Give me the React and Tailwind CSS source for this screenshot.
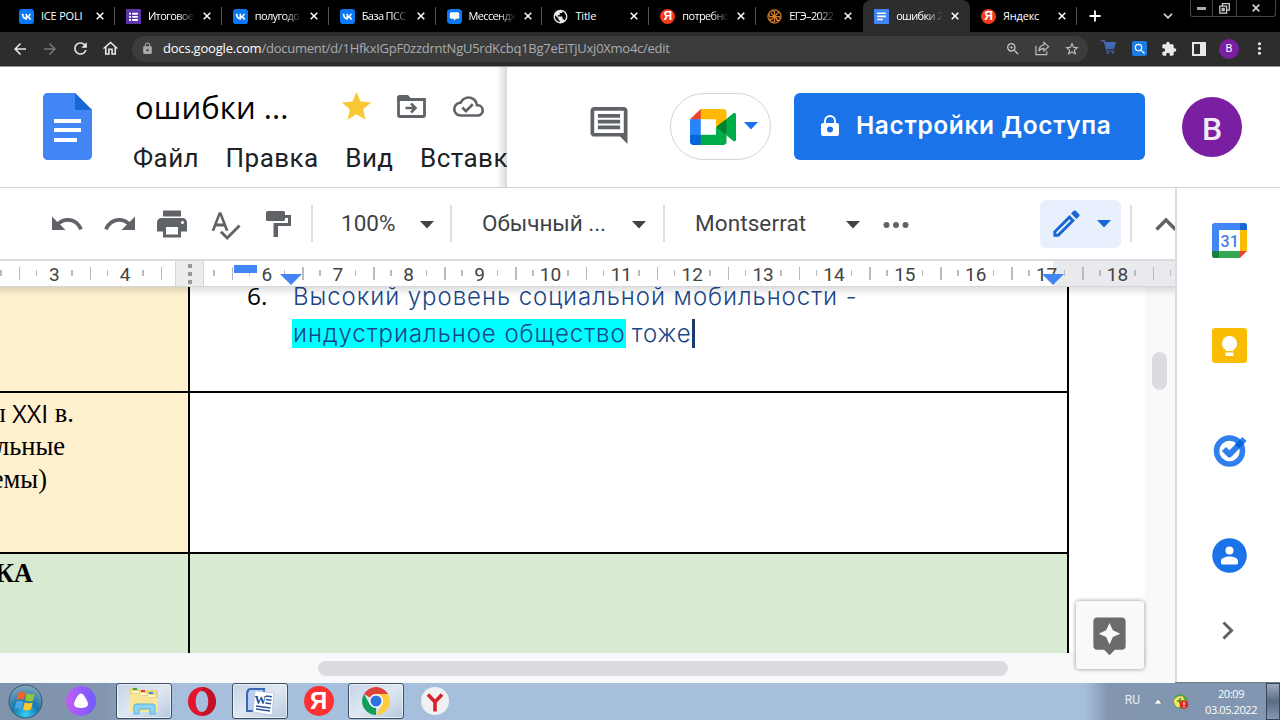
import React from 'react';
import {
  MdArrowBack, MdArrowForward, MdRefresh, MdOutlineHome, MdLock, MdZoomIn, MdStarBorder, MdShoppingCart,
  MdExtension, MdMoreVert, MdStar, MdUndo, MdRedo, MdPrint, MdSpellcheck, MdAssistant, MdSearch, MdPublic,
  MdOutlineCloudDone, MdOutlineEdit,
} from 'react-icons/md';

const SANS = "font-['Open_Sans','Noto_Sans',sans-serif]";
const ROBOTO = "font-['Roboto',sans-serif]";

function VkIcon() {
  return (
    <svg viewBox="0 0 24 24" className="size-full">
      <rect width="24" height="24" rx="5" fill="#0a78f5" />
      <path fill="#fff" d="M12.7 17C7.500 17 4.500 13.300 4.400 7.500h2.700c.1 4.200 2 6 3.400 6.300V7.500H13v3.700c1.500-.2 3.100-1.900 3.600-3.700h2.500c-.4 2.100-2 3.800-3.200 4.500 1.200.5 3 2 3.700 5h-2.700c-.6-1.700-2-2.900-3.900-3.100V17z" />
    </svg>
  );
}

function FormsIcon() {
  return (
    <svg viewBox="0 0 24 24" className="size-full">
      <rect width="24" height="24" rx="1" fill="#5e35a8" />
      <path fill="#fff" d="M5 6h3v3H5zm0 5h3v3H5zm0 5h3v3H5zM10 6h9v3h-9zm0 5h9v3h-9zm0 5h9v3h-9z" />
    </svg>
  );
}

function ChatIcon() {
  return (
    <svg viewBox="0 0 24 24" className="size-full">
      <rect width="24" height="24" rx="6" fill="#0a78f5" />
      <path fill="#fff" d="M7 5h10a2.500 2.500 0 0 1 2.500 2.500V13a2.500 2.500 0 0 1-2.500 2.500h-3L11 19v-3.500H7A2.500 2.500 0 0 1 4.500 13V7.500A2.500 2.500 0 0 1 7 5z" />
    </svg>
  );
}

function YandexBadge({ className = "text-[12px] bg-[#f23c1c] font-['Liberation_Sans',sans-serif]" }) {
  return (
    <span className={`flex size-full items-center justify-center rounded-full font-bold leading-none text-white ${className}`}>
      Я
    </span>
  );
}

function WheelIcon() {
  return (
    <svg viewBox="0 0 24 24" className="size-full" fill="none" stroke="#d07a2a" strokeWidth="2">
      <circle cx="12" cy="12" r="10.500" />
      <path d="M12 12V4l-4-1M12 12l6-6v-3M12 12h8l1 4M12 12l6 6h-4M12 12v8l-4 1M12 12l-6 6-2-3M12 12H4L3 8M12 12 6 6" />
    </svg>
  );
}

function DocsSmallIcon() {
  return (
    <svg viewBox="0 0 24 24" className="size-full">
      <rect width="24" height="24" rx="1.500" fill="#4285f4" />
      <path fill="#fff" d="M5 5.500h14V8H5zm0 5h14V13H5zm0 5h9V18H5z" />
    </svg>
  );
}

function CloseX() {
  return (
    <svg viewBox="0 0 8 8" className="size-2 shrink-0" stroke="#fff" strokeWidth="1.500">
      <path d="M.7.7l6.600 6.600M7.300.7L.7 7.300" />
    </svg>
  );
}

const tabs = [
  { icon: <VkIcon />, title: 'ICE POLI' },
  { icon: <FormsIcon />, title: 'Итоговое', fade: true },
  { icon: <VkIcon />, title: 'полугодо', fade: true },
  { icon: <VkIcon />, title: 'База ПСС', fade: true },
  { icon: <ChatIcon />, title: 'Мессендж', fade: true },
  { icon: <MdPublic className="size-full scale-110 text-[#e8e8e8]" />, title: 'Title' },
  { icon: <YandexBadge />, title: 'потребно', fade: true },
  { icon: <WheelIcon />, title: 'ЕГЭ–2022', fade: true },
  { icon: <DocsSmallIcon />, title: 'ошибки 2', active: true, fade: true },
  { icon: <YandexBadge />, title: 'Яндекс' },
];

function TabStrip() {
  return (
    <div className="flex h-8 bg-black pl-2">
      {tabs.map((t, i) => (
        <div
          key={i}
          className={`flex w-[106.900px] shrink-0 items-center pl-[11px] ${t.active ? 'rounded-t-lg bg-[#2d2d2d]' : ''}`}
        >
          <span className="size-[15px] shrink-0">{t.icon}</span>
          <span className={`ml-[7px] w-[47px] shrink-0 overflow-hidden whitespace-nowrap text-[11px] text-white ${SANS} ${t.fade ? 'tracking-[-0.650px] [mask-image:linear-gradient(to_right,black_62%,transparent_100%)]' : 'tracking-[-0.200px]'}`}>
            {t.title}
          </span>
          <span className="ml-[8px] flex flex-1 items-center justify-between">
            <CloseX />
            <span className={`h-[18px] w-px ${t.active || i === 7 ? '' : 'bg-[#555]'}`} />
          </span>
        </div>
      ))}
      <svg viewBox="0 0 12 12" className="mt-[10px] ml-[12px] size-3 shrink-0" stroke="#fff" strokeWidth="1.800">
        <path d="M6 .5v11M.5 6h11" />
      </svg>
      <svg viewBox="0 0 10 6" className="mt-[13px] ml-[62px] h-[6px] w-[10px] shrink-0" fill="none" stroke="#ddd" strokeWidth="1.600">
        <path d="M1 .8l4 4 4-4" />
      </svg>
      <div className="ml-[17px] flex h-[17px] shrink-0 rounded-b-[3px] border border-t-0 border-[#444]">
        <span className="flex w-[22px] items-center justify-center border-r border-[#444]">
          <span className="h-[3px] w-[9px] bg-[#aaa]" />
        </span>
        <span className="flex w-[24px] items-center justify-center border-r border-[#444]">
          <svg viewBox="0 0 11 11" className="size-[11px]" fill="none" stroke="#ccc" strokeWidth="1.300">
            <path d="M3.500 3V.7h6.800v6.500H8M.8 3.200h6.800v7H.8zM3.200 5.500h2v2h-2z" />
          </svg>
        </span>
        <span className="flex w-[38px] items-center justify-center">
          <svg viewBox="0 0 8 8" className="size-2" stroke="#ccc" strokeWidth="1.800">
            <path d="M.7.7l6.600 6.600M7.300.7L.7 7.300" />
          </svg>
        </span>
      </div>
    </div>
  );
}

function AddressBar() {
  return (
    <div className="flex h-[34px] items-center border-b border-[#262626] bg-[#2d2d2d] text-[#e8eaed]">
      <div className="flex w-[132px] shrink-0 items-center gap-[12px] pl-[11px]">
        <MdArrowBack className="size-[18px]" />
        <MdArrowForward className="size-[18px] text-[#777]" />
        <MdRefresh className="size-[19px]" />
        <MdOutlineHome className="size-[19px] -ml-px" />
      </div>
      <div className={`flex h-[26px] w-[956px] shrink-0 items-center rounded-full bg-[#3c3c3c] pl-[9px] pr-[8px] ${SANS}`}>
        <MdLock className="size-[13px] text-[#aaa]" />
        <span className="ml-[9px] flex-1 whitespace-nowrap text-[13px] leading-none text-[#a9acb0]">
          <span className="tracking-[-0.200px] text-white">docs.google.com</span>
          <span className="tracking-[-0.260px]">/document/d/1HfkxIGpF0zzdrntNgU5rdKcbq1Bg7eEiTjUxj0Xmo4c/edit</span>
        </span>
        <span className="flex items-center gap-[14px] text-[#c4c4c4]">
          <MdZoomIn className="size-4" />
          <svg viewBox="0 0 16 16" className="size-[15px]" fill="none" stroke="#bbb" strokeWidth="1.300">
            <path d="M1 5v9.500h11.500V11M9.500 1.500l5 4.500-5 4.500V7.800C7 7.800 5.200 8.800 4 11c.3-3.500 2-6.300 5.500-6.800z" />
          </svg>
          <MdStarBorder className="size-4" />
        </span>
      </div>
      <div className="flex flex-1 items-center pl-[13px]">
        <svg viewBox="0 0 17 14" className="h-[14px] w-[17px] shrink-0 -mt-[3px]">
          <path fill="#3f69b3" d="M0 0h3.500l1 2H15l-2 7H6l.5 1.500H13v1H5.500L2.700 1.500H0z" />
          <circle cx="7" cy="12.500" r="1.300" fill="#3f5f96" /><circle cx="12" cy="12.500" r="1.300" fill="#3f5f96" />
        </svg>
        <span className="ml-[14px] flex size-[15px] items-center justify-center rounded-[2px] bg-[#1b7ce6]">
          <MdSearch className="size-[14px] text-white" />
        </span>
        <MdExtension className="ml-[14px] size-4" />
        <span className="ml-[15px] flex size-[14px] justify-end border-2 border-[#e8e8e8]">
          <span className="w-[4px] bg-[#e8e8e8]" />
        </span>
        <span className={`ml-[13px] flex size-[20px] items-center justify-center rounded-full bg-[#7b1fa2] text-[11px] leading-none text-white ${ROBOTO}`}>B</span>
        <MdMoreVert className="ml-[11px] size-[19px]" />
      </div>
    </div>
  );
}

function Caret({ className = 'text-[#5f6368]' }) {
  return (
    <svg viewBox="0 0 14 8" className={`h-2 w-[14px] shrink-0 ${className}`} fill="currentColor">
      <path d="M0 0h14L7 7.500z" />
    </svg>
  );
}

function MeetIcon() {
  return (
    <svg viewBox="0 0 87.500 72" className="h-[36px] w-[46px]" preserveAspectRatio="none">
      <path fill="#00832d" d="M49.500 36l8.530 9.750 11.470 7.330 2-17.020-2-16.640-11.690 6.440z" />
      <path fill="#0066da" d="M0 51.500V66c0 3.315 2.685 6 6 6h14.500l3-10.960-3-9.540-9.950-3z" />
      <path fill="#e94235" d="M20.500 0L0 20.500l10.550 3 9.950-3 2.950-9.410z" />
      <path fill="#2684fc" d="M20.500 20.500H0v31h20.500z" />
      <path fill="#00ac47" d="M82.600 8.680L69.500 19.420v33.660l13.160 10.790c1.970 1.540 4.850.135 4.850-2.370V11c0-2.535-2.945-3.925-4.910-2.320zM49.500 36v15.500h-29V72h43c3.315 0 6-2.685 6-6V53.080z" />
      <path fill="#ffba00" d="M63.500 0h-43v20.500h29V36l20-16.570V6c0-3.315-2.685-6-6-6z" />
    </svg>
  );
}

function Header() {
  return (
    <header className="flex h-[122px] border-t border-b border-t-[#999] border-b-[#d4d6d9] bg-white">
      <div className="relative flex w-[507px] shrink-0 overflow-hidden pl-[43px]">
        <svg viewBox="0 0 49 67" className="mt-[26px] h-[67px] w-[49px] shrink-0">
          <path fill="#4285f4" d="M4.500 0H32l17 17v45.500a4.500 4.500 0 0 1-4.500 4.500h-40A4.500 4.500 0 0 1 0 62.500v-58A4.500 4.500 0 0 1 4.500 0z" />
          <path fill="#1967d2" d="M32 0l17 17H32z" />
          <path fill="#fff" d="M11 26h27v4H11zm0 9h27v4H11zm0 10h23v4H11z" />
        </svg>
        <div className="ml-[41px] flex flex-col">
          <div className="mt-[17px] ml-[2px] flex h-[46px] items-center">
            <span className={`w-[205px] whitespace-nowrap text-[31px] tracking-[0.100px] text-black ${SANS}`}>ошибки ...</span>
            <MdStar className="-mt-[2px] size-[35px] shrink-0 text-[#f9c834] -ml-[1px]" />
            <svg viewBox="0 0 29 23" className="ml-[23px] h-[23px] w-[29px] shrink-0 -mt-[2px]" fill="none" stroke="#5f6368" strokeWidth="2.800">
              <path d="M1.500 4.500h26v15.500a1.500 1.500 0 0 1-1.500 1.500H3A1.500 1.500 0 0 1 1.500 20z" />
              <path fill="#5f6368" stroke="none" d="M0 6V2.500A2.500 2.500 0 0 1 2.500 0H11l3 3.500V6z" />
              <path d="M8.500 13h9M14 8.500l4.500 4.500-4.500 4.500" strokeWidth="2.500" />
            </svg>
            <MdOutlineCloudDone className="ml-[27px] size-[31px] shrink-0 text-[#5f6368] -mt-[2px]" />
          </div>
          <nav className={`mt-[11px] flex gap-[26.500px] whitespace-nowrap text-[26px] leading-[34px] tracking-[0.460px] text-[#202124] ${ROBOTO}`}>
            <span>Файл</span>
            <span>Правка</span>
            <span>Вид</span>
            <span>Вставка</span>
          </nav>
        </div>
        <div className="absolute inset-y-0 right-0 w-[10px] bg-linear-to-r from-transparent to-black/15" />
      </div>
      <div className="flex flex-1 items-start">
        <svg viewBox="2 2 20 20" className="mt-[40px] ml-[83px] h-[37px] w-[38px] shrink-0" fill="#5f6368">
          <path d="M22 4c0-1.100-.9-2-2-2H4c-1.100 0-2 .9-2 2v12c0 1.100.9 2 2 2h14l4 4V4zM4 16V4h16v12z" fillRule="evenodd" />
          <path d="M6 12h12v2H6zm0-3.100h12v2H6zm0-3.100h12v2H6z" />
        </svg>
        <div className="mt-[26px] ml-[42px] flex h-[67px] w-[101px] shrink-0 items-center rounded-full border border-[#d2d5d9] pl-[19px]">
          <MeetIcon />
          <Caret className="ml-[8px] -mt-px text-[#1a73e8]" />
        </div>
        <div className="mt-[26px] ml-[23px] flex h-[67px] w-[351px] shrink-0 items-center rounded-[6px] bg-[#1a73e8] pl-[27px]">
          <svg viewBox="0 0 18 21" className="-mt-[2px] h-[21px] w-[18px] shrink-0">
            <path fill="none" stroke="#fff" strokeWidth="2" d="M4 9V6a5 5 0 0 1 10 0v3" />
            <path fill="#fff" fillRule="evenodd" d="M2 8h14a2 2 0 0 1 2 2v9a2 2 0 0 1-2 2H2a2 2 0 0 1-2-2v-9a2 2 0 0 1 2-2zm7 3.500a3 3 0 1 0 0 6 3 3 0 0 0 0-6z" />
          </svg>
          <span className="-mt-[2px] ml-[17px] whitespace-nowrap text-[24.500px] font-semibold tracking-[0.600px] text-white font-['Inter',sans-serif]">
            Настройки Доступа
          </span>
        </div>
        <div className={`mt-[30px] ml-[37px] flex size-[60px] shrink-0 items-center justify-center rounded-full bg-[#7b1fa2] pt-[3px] text-[32px] leading-none font-medium text-[#f3eaf7] ${ROBOTO}`}>
          B
        </div>
      </div>
    </header>
  );
}

function Divider({ className = '' }) {
  return <span className={`h-[37px] w-[2px] shrink-0 bg-[#dcdee1] ${className}`} />;
}

function Toolbar() {
  return (
    <div className={`flex h-[73px] shrink-0 items-center overflow-hidden border-b-2 border-[#d9dbde] bg-white text-[22.500px] text-[#3f4246] ${ROBOTO}`}>
      <MdUndo className="mt-px ml-[49px] size-9 shrink-0 text-[#5f6368]" />
      <MdRedo className="mt-px ml-[17px] size-9 shrink-0 text-[#5f6368]" />
      <MdPrint className="mt-px ml-[16px] size-9 shrink-0 text-[#5f6368]" />
      <MdSpellcheck className="mt-[2px] ml-[18px] size-[34px] shrink-0 text-[#5f6368]" />
      <svg viewBox="0 0 25 26" className="mt-px ml-[24px] h-[26px] w-[25px] shrink-0" fill="#5f6368">
        <rect width="19" height="10" rx="1.500" />
        <path d="M18 4h7v11H12v11H7.500V12H22V7h-4z" />
      </svg>
      <Divider className="ml-[20px]" />
      <span className="ml-[28px] w-[79px] shrink-0">100%</span>
      <Caret className="mt-[3px]" />
      <Divider className="ml-[16px]" />
      <span className="ml-[30px] w-[150px] shrink-0 tracking-[-0.050px]">Обычный ...</span>
      <Caret className="mt-[3px]" />
      <Divider className="ml-[17px]" />
      <span className="ml-[30px] w-[151px] shrink-0 tracking-[0.100px]">Montserrat</span>
      <Caret className="mt-[3px]" />
      <svg viewBox="0 0 26 6" className="mt-[3px] ml-[23px] h-[6px] w-[26px] shrink-0" fill="#5f6368">
        <circle cx="3.500" cy="3" r="3" /><circle cx="13" cy="3" r="3" /><circle cx="22.500" cy="3" r="3" />
      </svg>
      <div className="ml-[131px] flex h-[48px] w-[81px] shrink-0 items-center rounded-[6px] bg-[#e8f0fe] pl-[9px]">
        <MdOutlineEdit className="size-[35px] text-[#1967d2]" />
        <Caret className="ml-[13px] text-[#1967d2]" />
      </div>
      <Divider className="ml-[9px]" />
      <svg viewBox="0 0 22 14" className="ml-[23px] h-[14px] w-[22px] shrink-0" fill="none" stroke="#5f6368" strokeWidth="3.500">
        <path d="M1.500 12.500L11 3l9.500 9.500" />
      </svg>
    </div>
  );
}

const marks = [2, 3, 4, 5, 6, 7, 8, 9, 10, 11, 12, 13, 14, 15, 16, 17, 18, 19];

function Ruler() {
  return (
    <div className="relative flex h-[26px] shrink-0 overflow-hidden border-b border-[#d5d7da] bg-[linear-gradient(to_right,white_1053px,#e8eaed_1053px)]">
      <div className="-ml-[52px] flex">
        {marks.map((n) => (
          <div key={n} className={`flex h-6 w-[70.880px] shrink-0 items-center text-[19px] text-[#444] ${ROBOTO}`}>
            <span className="h-[13px] w-[1.500px] bg-[#b9bbbe]" />
            <span className="ml-[15.500px] h-[6px] w-[1.500px] bg-[#b9bbbe]" />
            <span className="mt-[2px] flex-1 text-center leading-none">{n === 5 ? '' : n}</span>
            <span className="mr-[17px] h-[6px] w-[1.500px] bg-[#b9bbbe]" />
          </div>
        ))}
      </div>
      <div className="absolute inset-y-0 left-[175px] flex w-[29px] flex-col items-center justify-center gap-[4px] border-r border-l border-[#d5d7da] bg-[#ececec]">
        <span className="size-[4px] bg-[#999]" />
        <span className="size-[4px] bg-[#999]" />
        <span className="size-[4px] bg-[#999]" />
      </div>
      <span className="absolute top-[4px] left-[234px] h-[8px] w-[23px] bg-[#4285f4]" />
      <svg viewBox="0 0 22 11" className="absolute top-[13px] left-[280px] h-[11px] w-[22px]" fill="#4285f4"><path d="M0 0h22L11 11z" /></svg>
      <svg viewBox="0 0 22 11" className="absolute top-[13px] left-[1042px] h-[11px] w-[22px]" fill="#4285f4"><path d="M0 0h22L11 11z" /></svg>
    </div>
  );
}

function Page() {
  return (
    <div className="relative flex h-[366px] shrink-0 overflow-hidden">
      <div className="flex w-[1145px] shrink-0 bg-white">
        <div className="flex w-[190px] shrink-0 flex-col border-r-2 border-black font-['Liberation_Serif',serif] text-[26.500px] leading-[33.300px] text-black">
          <div className="h-[106px] shrink-0 border-b-2 border-black bg-[#fff0ce]" />
          <div className="h-[161px] shrink-0 overflow-hidden border-b-2 border-black bg-[#fff0ce] pt-[3.500px] whitespace-nowrap">
            <div className="flex w-[74px] justify-end whitespace-pre">ы <span className={`text-[25px] ${SANS}`}>XXI</span> в.</div>
            <div className="flex w-[65px] justify-end">льные</div>
            <div className="flex w-[47px] justify-end">емы)</div>
          </div>
          <div className="flex-1 overflow-hidden bg-[#d9ead3] pt-[3px] font-bold">
            <div className="flex w-[33px] justify-end">КА</div>
          </div>
        </div>
        <div className="flex w-[879px] shrink-0 flex-col border-r-2 border-black">
          <div className="flex h-[106px] shrink-0 overflow-hidden border-b-2 border-black pl-[57px] font-['Inter',sans-serif] text-[24px] leading-[37px]">
            <span className={`-mt-[10px] w-[46px] text-[24.500px] text-black ${SANS}`}>6.</span>
            <div className="-mt-[9px] whitespace-nowrap font-light text-[#1c4587]">
              <div className="tracking-[0.950px]">Высокий уровень социальной мобильности -</div>
              <div className="flex items-center tracking-[0.950px]">
                <span className="-ml-px bg-[#00ffff] pl-px leading-[29px]">индустриальное общество</span>
                <span className="ml-[6px]">тоже</span>
                <span className="h-[29px] w-[3px] bg-[#1c3a6e]" />
              </div>
            </div>
          </div>
          <div className="h-[161px] shrink-0 border-b-2 border-black" />
          <div className="flex-1 bg-[#d9ead3]" />
        </div>
      </div>
      <div className="flex flex-1 justify-center bg-[#f8f9fb] pt-[65px] pr-px">
        <span className="h-[38px] w-[15px] rounded-full bg-[#dadce0]" />
      </div>
      <div className="absolute inset-x-0 top-0 h-[9px] bg-linear-to-b from-black/12 to-transparent" />
    </div>
  );
}

function CalendarIcon() {
  return (
    <svg viewBox="0 0 35 35" className="size-[35px]">
      <path fill="#4285f4" d="M2.500 0H28v7H7v21H0V2.500A2.500 2.500 0 0 1 2.500 0z" />
      <path fill="#1967d2" d="M28 0h4.500A2.500 2.500 0 0 1 35 2.500V7h-7z" />
      <path fill="#fbbc04" d="M28 7h7v21h-7z" />
      <path fill="#34a853" d="M7 28h21v7H7z" />
      <path fill="#188038" d="M0 28h7v7H2.500A2.500 2.500 0 0 1 0 32.500z" />
      <path fill="#ea4335" d="M28 28h7l-7 7z" />
      <path fill="#fff" d="M7 7h21v21H7z" />
      <text x="17.700" y="23.500" textAnchor="middle" fontSize="16" fontFamily="Roboto" fontWeight="500" fill="#3f80e8">31</text>
    </svg>
  );
}

function SidePanel() {
  return (
    <aside className="flex w-[105px] shrink-0 flex-col items-center gap-[70px] border-l-2 border-[#d9dbde] bg-white pt-[35px] pl-[2px]">
      <CalendarIcon />
      <svg viewBox="0 0 35 35" className="size-[35px] shrink-0">
        <rect width="35" height="35" rx="3" fill="#fbbc04" />
        <path fill="#fff" d="M17.500 8a7.500 7.500 0 0 1 4 13.800V23h-8v-1.200A7.500 7.500 0 0 1 17.500 8zM13.500 24.500h8V28h-8z" />
      </svg>
      <svg viewBox="0 0 35 35" className="size-[35px] shrink-0">
        <circle cx="17.500" cy="18" r="13" fill="none" stroke="#2f80ed" strokeWidth="5.500" />
        <path fill="none" stroke="#2f80ed" strokeWidth="6" strokeLinejoin="round" d="M12 16l5.500 5.500L32.500 6" />
        <path stroke="#0066da" strokeWidth="6" d="M25 13.500l5-5" />
      </svg>
      <svg viewBox="0 0 35 35" className="size-[35px] shrink-0">
        <circle cx="17.500" cy="17.500" r="17.300" fill="#1a73e8" />
        <circle cx="17.500" cy="12.500" r="4" fill="#fff" />
        <path fill="#fff" d="M9 25v-2c0-3 4.500-4.500 8.500-4.500S26 20 26 23v2a1.500 1.500 0 0 1-1.500 1.500h-14A1.500 1.500 0 0 1 9 25z" />
      </svg>
      <svg viewBox="0 0 12 19" className="-mt-[22px] -ml-[3px] h-[19px] w-[12px] shrink-0" fill="none" stroke="#5f6368" strokeWidth="3">
        <path d="M1.500 1.500l8 8-8 8" />
      </svg>
    </aside>
  );
}

function Workspace() {
  return (
    <main className="flex h-[495px]">
      <div className="relative flex w-[1175px] shrink-0 flex-col">
        <Toolbar />
        <Ruler />
        <Page />
        <div className="flex flex-1 bg-[#f8f9fb] pt-[8px] pl-[318px]">
          <span className="h-[15px] w-[690px] rounded-full bg-[#dadce0]" />
        </div>
        <div className="absolute top-[413px] left-[1075.500px] flex size-[68px] items-center justify-center rounded-[3px] bg-[#f9f9f9] shadow-[0_0_4px_rgba(0,0,0,0.450)]">
          <MdAssistant className="mt-[1px] -ml-px size-[43px] text-[#6b6b6b]" />
        </div>
      </div>
      <SidePanel />
    </main>
  );
}

function TaskButton({ children }) {
  return (
    <div className="flex h-[36px] w-[56px] shrink-0 items-center justify-center rounded-[3px] border border-[#3f4d60] bg-linear-to-br from-[#c4d3e6] via-[#dfe8f2] to-[#b5c8df] shadow-[inset_0_0_0_1px_rgba(255,255,255,0.600)]">
      {children}
    </div>
  );
}

function WindowsOrb() {
  return (
    <svg viewBox="0 0 35 35" className="size-[35px]">
      <defs>
        <radialGradient id="orb" cx="50%" cy="90%" r="90%">
          <stop offset="0" stopColor="#35d0f5" />
          <stop offset=".45" stopColor="#1878ad" />
          <stop offset="1" stopColor="#88a8bd" />
        </radialGradient>
      </defs>
      <circle cx="17.500" cy="17.500" r="16.500" fill="url(#orb)" stroke="#39536b" strokeWidth="1" />
      <path fill="#f0652f" d="M10 9c3-2 5-1.500 7.500-.3L15.800 16c-2.500-1.200-4.500-1.300-7.300.2z" />
      <path fill="#90c73e" d="M18.700 9.300c3 1.300 5 1.500 8 .2L25 16.800c-2.600 1.200-5 1-8-.2z" />
      <path fill="#4aa8e8" d="M8.200 17.800c2.700-1.500 4.800-1.300 7.300-.2l-1.800 7.200c-2.500-1.200-4.600-1-7.200.3z" />
      <path fill="#fdc92e" d="M16.700 18.200c3 1.200 5.200 1.300 8 .2L23 25.600c-2.800 1.200-5 1-8-.2z" />
    </svg>
  );
}

function Taskbar() {
  return (
    <footer className="flex h-[38px] items-start border-t border-[#6f7b8c] bg-[linear-gradient(to_right,#8093ad_0,#8296b0_105px,#a5bfdd_172px,#a5bfdd_1085px,#8296b0_1108px,#8196b1_100%)]">
      <div className="flex h-[36px] w-[116px] shrink-0 items-center pl-[7.500px]">
        <WindowsOrb />
        <svg viewBox="0 0 30 30" className="ml-[23px] size-[30px]">
          <defs>
            <linearGradient id="alice" x1="0" x2="1"><stop offset="0" stopColor="#c45cf5" /><stop offset="1" stopColor="#6c5cff" /></linearGradient>
          </defs>
          <circle cx="15" cy="15" r="15" fill="url(#alice)" />
          <path fill="#fff" d="M15 7.500c2 0 3.300 2 5.500 6 2.500 4.500 2.500 8.500-5.500 8.500s-8-4-5.500-8.500c2.200-4 3.500-6 5.500-6z" />
        </svg>
      </div>
      <TaskButton>
        <svg viewBox="0 0 31 28" className="h-[28px] w-[31px]">
          <path fill="#ecd37c" d="M1 2a1 1 0 0 1 1-1h7l2 2h17a1 1 0 0 1 1 1v20H1z" />
          <path fill="#2fa84f" d="M4 1h4v2H4z" /><path fill="#d8402c" d="M12 3h4v2h-4z" /><path fill="#3b8de0" d="M20 5h4v2h-4z" />
          <path fill="#fff7d0" d="M3 4h7v2H3zm8 2h7v2h-7zm8 2h8v2h-8z" />
          <path fill="#f7e59a" d="M1 7h9l2 2h7l2 2h8v14H1z" />
          <path fill="#8fd3f2" stroke="#4aa7d6" strokeWidth=".8" d="M5 19a2 2 0 0 1 2-2h17a2 2 0 0 1 2 2v8h-5v-5H10v5H5z" />
        </svg>
      </TaskButton>
      <div className="flex h-[36px] w-[60px] shrink-0 items-center justify-center">
        <svg viewBox="0 0 28 29" className="h-[29px] w-[28px]">
          <path fill="#e4142c" fillRule="evenodd" d="M14 0c8 0 14 6.500 14 14.500S22 29 14 29 0 22.500 0 14.500 6 0 14 0zm0 4c-4 0-6.300 5-6.300 10.500S10 25 14 25s6.300-5 6.300-10.500S18 4 14 4z" />
          <path fill="#a80f20" d="M17 .3c6.500 1.200 11 7.200 11 14.200s-4.500 13-11 14.200c-2 0-3-1.500-3-3.700 4 0 6.300-5 6.300-10.500S18 4 14 4c0-2.200 1-3.700 3-3.700z" opacity=".55" />
        </svg>
      </div>
      <TaskButton>
        <svg viewBox="0 0 30 29" className="h-[29px] w-[30px]">
          <path fill="#3c67b5" d="M5 1h15v24H1V8c0-4 1-7 4-7z" />
          <path fill="#b9cff0" d="M6 3h12v20H3V8c0-3 1-5 3-5z" />
          <path fill="#fff" stroke="#a9b8cf" strokeWidth=".6" d="M10 4l19 2-2 22-19-3z" />
          <path stroke="#2b569c" strokeWidth="1.500" d="M21 9l6 .7M21 12.500l5.500.7M20.500 16l5.500.7M11 19l14.500 2M11 22l14 2" />
          <text x="9.500" y="17" fontSize="12" fontWeight="bold" fontFamily="Liberation Serif" fill="#234d96">W</text>
        </svg>
      </TaskButton>
      <div className="flex h-[36px] w-[60px] shrink-0 items-center justify-center">
        <span className="ml-px size-[30px]"><YandexBadge className="bg-[#fc3232] text-[24px] font-['Liberation_Sans_Narrow','Liberation_Sans',sans-serif]" /></span>
      </div>
      <TaskButton>
        <svg viewBox="0 0 28 28" className="size-[28px]">
          <path fill="#db4437" d="M14 14L1.900 7A14 14 0 0 1 26.100 7z" />
          <path fill="#0f9d58" d="M14 14v14A14 14 0 0 1 1.900 7l6 10.500z" />
          <path fill="#ffcd40" d="M14 7h12.100A14 14 0 0 1 14 28l6-10.500z" />
          <circle cx="14" cy="14" r="7" fill="#fff" />
          <circle cx="14" cy="14" r="5.500" fill="#2f73e0" />
        </svg>
      </TaskButton>
      <div className="flex h-[36px] w-[62px] shrink-0 items-center justify-center">
        <svg viewBox="0 0 28 28" className="size-[28px]">
          <circle cx="14" cy="14" r="14" fill="#eef0f2" />
          <path fill="none" stroke="#d8202a" strokeWidth="3.500" d="M7 7.500l7 7.500L21 7.500M14 14v10.500" />
        </svg>
      </div>
      <div className={`ml-auto flex h-full items-center text-white ${SANS}`}>
        <span className="-mt-[4px] text-[12px] text-[#e8eef5] font-['Roboto',sans-serif]">RU</span>
        <svg viewBox="0 0 8 5" className="ml-[14px] h-[5px] w-2"><path fill="#fff" stroke="#4b5666" strokeWidth=".5" d="M4 0l4 5H0z" /></svg>
        <svg viewBox="0 0 16 15" className="ml-[11px] h-[15px] w-4">
          <circle cx="7.500" cy="7.500" r="7.200" fill="#4fa33a" />
          <path fill="#f5e76a" d="M1 7.500c0-4 5-6 9-5l1 3 2 1-2 4-6 3c-2-1-4-3-4-6z" />
          <path stroke="#3d8c2d" strokeWidth="1.500" d="M7 4v6M4 7h6" />
          <circle cx="11" cy="10.500" r="4.300" fill="#e02a20" />
          <path stroke="#fff" strokeWidth="1.300" d="M11 8v3M11 12v1.200" />
        </svg>
        <div className="ml-[16px] w-[52px] text-center text-[11px] leading-[16px] tracking-[-0.400px]">
          <div>20:09</div>
          <div className="whitespace-nowrap">03.05.2022</div>
        </div>
        <span className="ml-[9px] h-full w-[14px] border border-[#38465a] bg-linear-to-b from-[#9dabbe] via-[#5c6c83] to-[#8799b2]" />
      </div>
    </footer>
  );
}

export default function App() {
  return (
    <div className="flex h-[720px] w-[1280px] flex-col overflow-hidden bg-white">
      <TabStrip />
      <AddressBar />
      <Header />
      <div className="-mb-px"><Workspace /></div>
      <Taskbar />
    </div>
  );
}
